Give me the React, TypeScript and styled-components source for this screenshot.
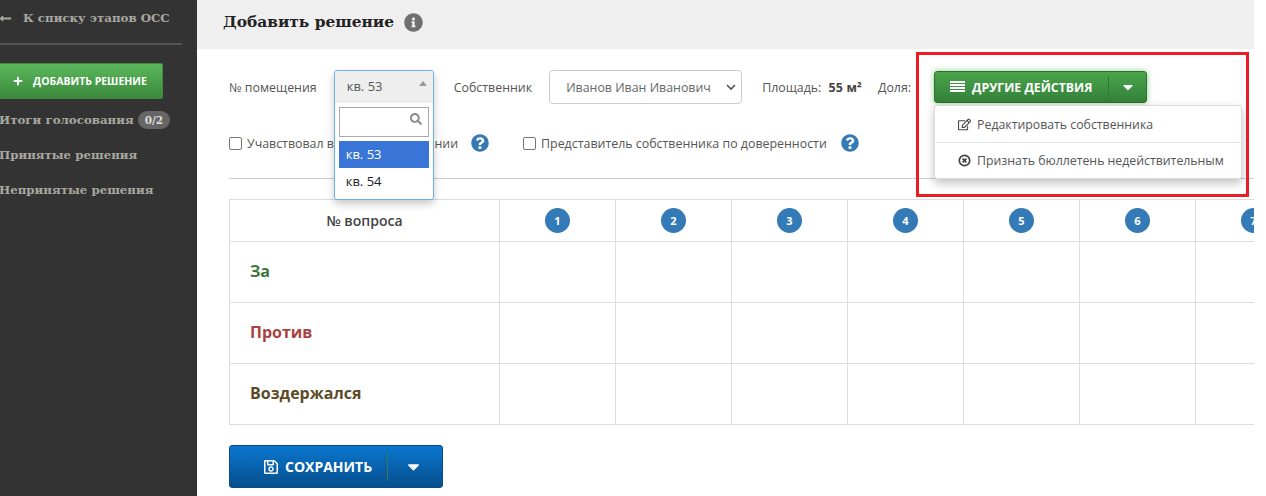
import React from "react";
import styled, { createGlobalStyle } from "styled-components";
import {
  FaCaretDown,
  FaInfoCircle,
  FaLongArrowAltLeft,
  FaPlus,
  FaQuestionCircle,
  FaRegEdit,
  FaRegSave,
  FaSearch,
} from "react-icons/fa";

const GlobalStyle = createGlobalStyle`
  html, body {
    margin: 0;
    height: 496px;
    overflow: hidden;
    background: #fff;
  }
  * { box-sizing: border-box; }
`;

const Page = styled.div`
  position: relative;
  display: flex;
  width: 1266px;
  height: 496px;
  overflow: hidden;
  font-family: "Open Sans", "Noto Sans", sans-serif;
  color: #555;
`;

const Sidebar = styled.aside`
  width: 197px;
  flex: none;
  background: #333;
  font-family: "DejaVu Serif", "Liberation Serif", serif;
  font-weight: 700;
  color: #a8a8a0;
`;

const BackLink = styled.div`
  width: 182px;
  height: 45px;
  padding-top: 10px;
  border-bottom: 2px solid #555;
  display: flex;
  align-items: flex-start;
  gap: 11px;
  font-size: 11.8px;
  line-height: 16px;
  svg { flex: none; margin-left: -1px; margin-top: 2px; font-size: 13px; }
`;

const AddButton = styled.button`
  display: flex;
  align-items: center;
  justify-content: center;
  gap: 10px;
  width: 163px;
  height: 36px;
  margin-top: 18px;
  padding: 0 2px 0 0;
  border: 1px solid #3c8a3f;
  border-left: 0;
  border-radius: 0 2px 2px 0;
  background: linear-gradient(#5cb85c, #3a883c);
  color: #fff;
  font-family: "Open Sans", sans-serif;
  font-size: 10.5px;
  font-weight: 700;
  text-transform: uppercase;
  svg { font-size: 10px; }
`;

const NavList = styled.div`
  display: flex;
  flex-direction: column;
  gap: 16px;
  margin-top: 11px;
  margin-left: -1px;
`;

const NavItem = styled.div`
  display: flex;
  align-items: center;
  gap: 4px;
  height: 19px;
  font-size: 11.8px;
  white-space: nowrap;
`;

const Badge = styled.span`
  padding: 0 7px;
  height: 18px;
  border-radius: 9px;
  background: #666;
  color: #ddd;
  font-size: 10.5px;
  line-height: 18px;
`;

const Main = styled.main`
  width: 1057px;
  flex: none;
  overflow: hidden;
`;

const TitleBar = styled.header`
  display: flex;
  align-items: center;
  gap: 10px;
  height: 49px;
  padding: 0 0 5px 26px;
  background: #efefef;
`;

const Title = styled.h1`
  margin: 0;
  font-family: "DejaVu Serif", "Liberation Serif", serif;
  font-size: 15.4px;
  font-weight: 700;
  color: #222;
`;

const InfoIcon = styled(FaInfoCircle)`
  font-size: 19px;
  color: #6f6f6f;
`;

const Form = styled.section`
  padding: 21px 0 0 32px;
`;

const FieldRow = styled.div`
  display: flex;
  align-items: center;
  height: 34px;
  font-size: 12.4px;
  white-space: nowrap;
`;

const CheckRow = styled(FieldRow)`
  margin-top: 22px;
`;

const Label = styled.span<{ $gap: number }>`
  margin-right: ${(p) => p.$gap}px;
`;

const SelectAnchor = styled.div`
  position: relative;
  width: 100px;
  height: 34px;
  margin-right: 20px;
`;

const SelectDrop = styled.div`
  position: absolute;
  top: 0;
  left: 0;
  z-index: 3;
  width: 100px;
  height: 130px;
  border: 1px solid #6cb0ea;
  border-radius: 3px;
  background: #fff;
  box-shadow: 0 4px 8px rgba(0, 0, 0, 0.22);
  overflow: hidden;
`;

const SelectHead = styled.div`
  display: flex;
  align-items: center;
  justify-content: space-between;
  height: 32px;
  padding: 0 6px 2px 12px;
  background: #eee;
  font-size: 13px;
  &::after {
    content: "";
    margin-bottom: 5px;
    border: 4px solid transparent;
    border-top: 0;
    border-bottom: 5px solid #999;
  }
`;

const SearchBox = styled.div`
  display: flex;
  align-items: center;
  justify-content: flex-end;
  height: 30px;
  margin: 4px;
  padding: 0 6px 6px 0;
  border: 1px solid #aaa;
  color: #888;
  svg { font-size: 12px; }
`;

const Option = styled.div<{ $active?: boolean }>`
  height: 27px;
  margin: 0 4px;
  padding-left: 7px;
  line-height: 26px;
  font-size: 13px;
  color: ${(p) => (p.$active ? "#fff" : "#222")};
  background: ${(p) => (p.$active ? "#3875d7" : "transparent")};
`;

const OwnerSelect = styled.div`
  display: flex;
  align-items: center;
  justify-content: space-between;
  width: 193px;
  height: 34px;
  margin-right: 20px;
  padding: 0 4px 0 16px;
  border: 1px solid #ccc;
  border-radius: 4px;
  color: #666;
  svg { flex: none; }
`;

const Strong = styled.b`
  margin-right: 16px;
  color: #444;
  letter-spacing: 0.2px;
`;

const ActionsWrap = styled.div`
  position: relative;
  margin-left: 23px;
`;

const SplitButton = styled.button<{ $w: number; $h: number; $tone: "green" | "blue" }>`
  display: flex;
  align-items: center;
  width: ${(p) => p.$w}px;
  height: ${(p) => p.$h}px;
  padding: 0;
  border: 1px solid ${(p) => (p.$tone === "green" ? "#2c6f2e" : "#0a4a86")};
  border-radius: 3px;
  color: #fff;
  font-family: "Open Sans", sans-serif;
  font-weight: 700;
  text-transform: uppercase;
  background: ${(p) =>
    p.$tone === "green"
      ? "linear-gradient(#4aa54a, #33803a)"
      : "linear-gradient(#0a76cf, #064f8d)"};
  box-shadow: ${(p) => (p.$tone === "green" ? "0 0 6px rgba(92, 184, 92, 0.7)" : "none")};
`;

const ButtonMain = styled.span<{ $pad: number; $size: number; $gap: number; $w: number }>`
  display: flex;
  align-items: center;
  gap: ${(p) => p.$gap}px;
  width: ${(p) => p.$w}px;
  padding-left: ${(p) => p.$pad}px;
  font-size: ${(p) => p.$size}px;
  white-space: nowrap;
`;

const ButtonCaret = styled.span<{ $h: number; $line: string; $size: number; $right: number }>`
  display: flex;
  align-items: center;
  justify-content: center;
  flex: 1;
  height: ${(p) => p.$h}px;
  padding-right: ${(p) => p.$right}px;
  border-left: 1px solid ${(p) => p.$line};
  svg { font-size: ${(p) => p.$size}px; }
`;

const SaveIcon = styled(FaRegSave)`
  flex: none;
  font-size: 16px;
`;

const ActionsMenu = styled.div`
  position: absolute;
  top: 34px;
  left: 0;
  z-index: 3;
  width: 308px;
  height: 74px;
  border: 1px solid #ddd;
  border-radius: 3px;
  background: #fff;
  box-shadow: 0 4px 10px rgba(0, 0, 0, 0.25);
`;

const MenuItem = styled.div<{ $line?: boolean }>`
  display: flex;
  align-items: center;
  gap: 6px;
  height: 36px;
  padding-left: 23px;
  border-top: ${(p) => (p.$line ? "1px solid #e5e5e5" : "0")};
  font-size: 12.3px;
  color: #555;
  svg { flex: none; width: 13px; height: 13px; color: #444; }
`;

const Check = styled.span`
  width: 13px;
  height: 13px;
  margin-right: 5px;
  border: 1px solid #767676;
  border-radius: 2px;
`;

const Help = styled(FaQuestionCircle)<{ $left: number; $right: number }>`
  margin-left: ${(p) => p.$left}px;
  margin-right: ${(p) => p.$right}px;
  font-size: 18px;
  color: #337ab7;
`;

const Divider = styled.hr`
  margin: 18px 0 20px;
  border: 0;
  border-top: 1px solid #ccc;
`;

const VoteTable = styled.table`
  border-collapse: collapse;
  table-layout: fixed;
  width: 1082px;
  font-size: 14px;
  td, th { border: 1px solid #ddd; padding: 0; }
`;

const HeadCell = styled.th`
  height: 42px;
  font-size: 14px;
  font-weight: 600;
  color: #444;
`;

const Num = styled.span`
  display: inline-flex;
  align-items: center;
  justify-content: center;
  width: 25px;
  height: 25px;
  border-radius: 50%;
  background: #337ab7;
  color: #fff;
  font-size: 11px;
  font-weight: 700;
`;

const RowName = styled.td<{ $color: string }>`
  height: 61px;
  padding: 0 0 2px 20px !important;
  font-size: 16px;
  font-weight: 700;
  color: ${(p) => p.$color};
`;

const Footer = styled.div`
  margin-top: 20px;
`;

const Annotation = styled.div`
  position: absolute;
  left: 916px;
  top: 52px;
  z-index: 4;
  width: 333px;
  height: 145px;
  border: 3px solid #ed1c24;
  pointer-events: none;
`;

const questions = [1, 2, 3, 4, 5, 6, 7];

const rows = [
  { name: "За", color: "#3c763d" },
  { name: "Против", color: "#a94442" },
  { name: "Воздержался", color: "#5b4a25" },
];

function LinesIcon() {
  return (
    <svg width="15" height="12" viewBox="0 0 15 12" fill="#fff">
      <rect y="0" width="15" height="2" />
      <rect y="3" width="15" height="2" />
      <rect y="6" width="15" height="2" />
      <rect y="9" width="15" height="2" />
    </svg>
  );
}

function RejectIcon() {
  return (
    <svg viewBox="0 0 13 13">
      <circle cx="6.5" cy="6.5" r="5.2" fill="none" stroke="currentColor" strokeWidth="1.7" />
      <path d="M4.6 4.6l3.8 3.8M8.4 4.6l-3.8 3.8" stroke="currentColor" strokeWidth="1.7" />
    </svg>
  );
}

export default function App() {
  return (
    <Page>
      <GlobalStyle />
      <Sidebar>
        <BackLink>
          <FaLongArrowAltLeft />
          К списку этапов ОСС
        </BackLink>
        <AddButton>
          <FaPlus />
          Добавить решение
        </AddButton>
        <NavList>
          <NavItem>
            Итоги голосования <Badge>0/2</Badge>
          </NavItem>
          <NavItem>Принятые решения</NavItem>
          <NavItem>Непринятые решения</NavItem>
        </NavList>
      </Sidebar>
      <Main>
        <TitleBar>
          <Title>Добавить решение</Title>
          <InfoIcon />
        </TitleBar>
        <Form>
          <FieldRow>
            <Label $gap={17}>№ помещения</Label>
            <SelectAnchor>
              <SelectDrop>
                <SelectHead>кв. 53</SelectHead>
                <SearchBox>
                  <FaSearch />
                </SearchBox>
                <Option $active>кв. 53</Option>
                <Option>кв. 54</Option>
              </SelectDrop>
            </SelectAnchor>
            <Label $gap={17}>Собственник</Label>
            <OwnerSelect>
              Иванов Иван Иванович
              <svg width="12" height="12" viewBox="0 0 12 12">
                <path d="M2 4l4 4 4-4" fill="none" stroke="#555" strokeWidth="1.6" />
              </svg>
            </OwnerSelect>
            <Label $gap={7}>Площадь:</Label>
            <Strong>55 м²</Strong>
            <span>Доля:</span>
            <ActionsWrap>
              <SplitButton $w={213} $h={32} $tone="green">
                <ButtonMain $pad={15} $size={12.3} $gap={7} $w={173}>
                  <LinesIcon />
                  Другие действия
                </ButtonMain>
                <ButtonCaret $h={22} $line="#2f7a33" $size={16} $right={0}>
                  <FaCaretDown />
                </ButtonCaret>
              </SplitButton>
              <ActionsMenu>
                <MenuItem>
                  <FaRegEdit />
                  Редактировать собственника
                </MenuItem>
                <MenuItem $line>
                  <RejectIcon />
                  Признать бюллетень недействительным
                </MenuItem>
              </ActionsMenu>
            </ActionsWrap>
          </FieldRow>
          <CheckRow>
            <Check />
            Учавствовал в очном голосовании
            <Help $left={13} $right={34} />
            <Check />
            Представитель собственника по доверенности
            <Help $left={14} $right={0} />
          </CheckRow>
          <Divider />
          <VoteTable>
            <colgroup>
              <col width={270} />
              {questions.map((q) => (
                <col key={q} width={116} />
              ))}
            </colgroup>
            <thead>
              <tr>
                <HeadCell>№ вопроса</HeadCell>
                {questions.map((q) => (
                  <HeadCell key={q}>
                    <Num>{q}</Num>
                  </HeadCell>
                ))}
              </tr>
            </thead>
            <tbody>
              {rows.map((r) => (
                <tr key={r.name}>
                  <RowName $color={r.color}>{r.name}</RowName>
                  {questions.map((q) => (
                    <td key={q} />
                  ))}
                </tr>
              ))}
            </tbody>
          </VoteTable>
          <Footer>
            <SplitButton $w={214} $h={43} $tone="blue">
              <ButtonMain $pad={33} $size={14} $gap={6} $w={157}>
                <SaveIcon />
                Сохранить
              </ButtonMain>
              <ButtonCaret $h={28} $line="#3d7a4a" $size={19} $right={4}>
                <FaCaretDown />
              </ButtonCaret>
            </SplitButton>
          </Footer>
        </Form>
      </Main>
      <Annotation />
    </Page>
  );
}
